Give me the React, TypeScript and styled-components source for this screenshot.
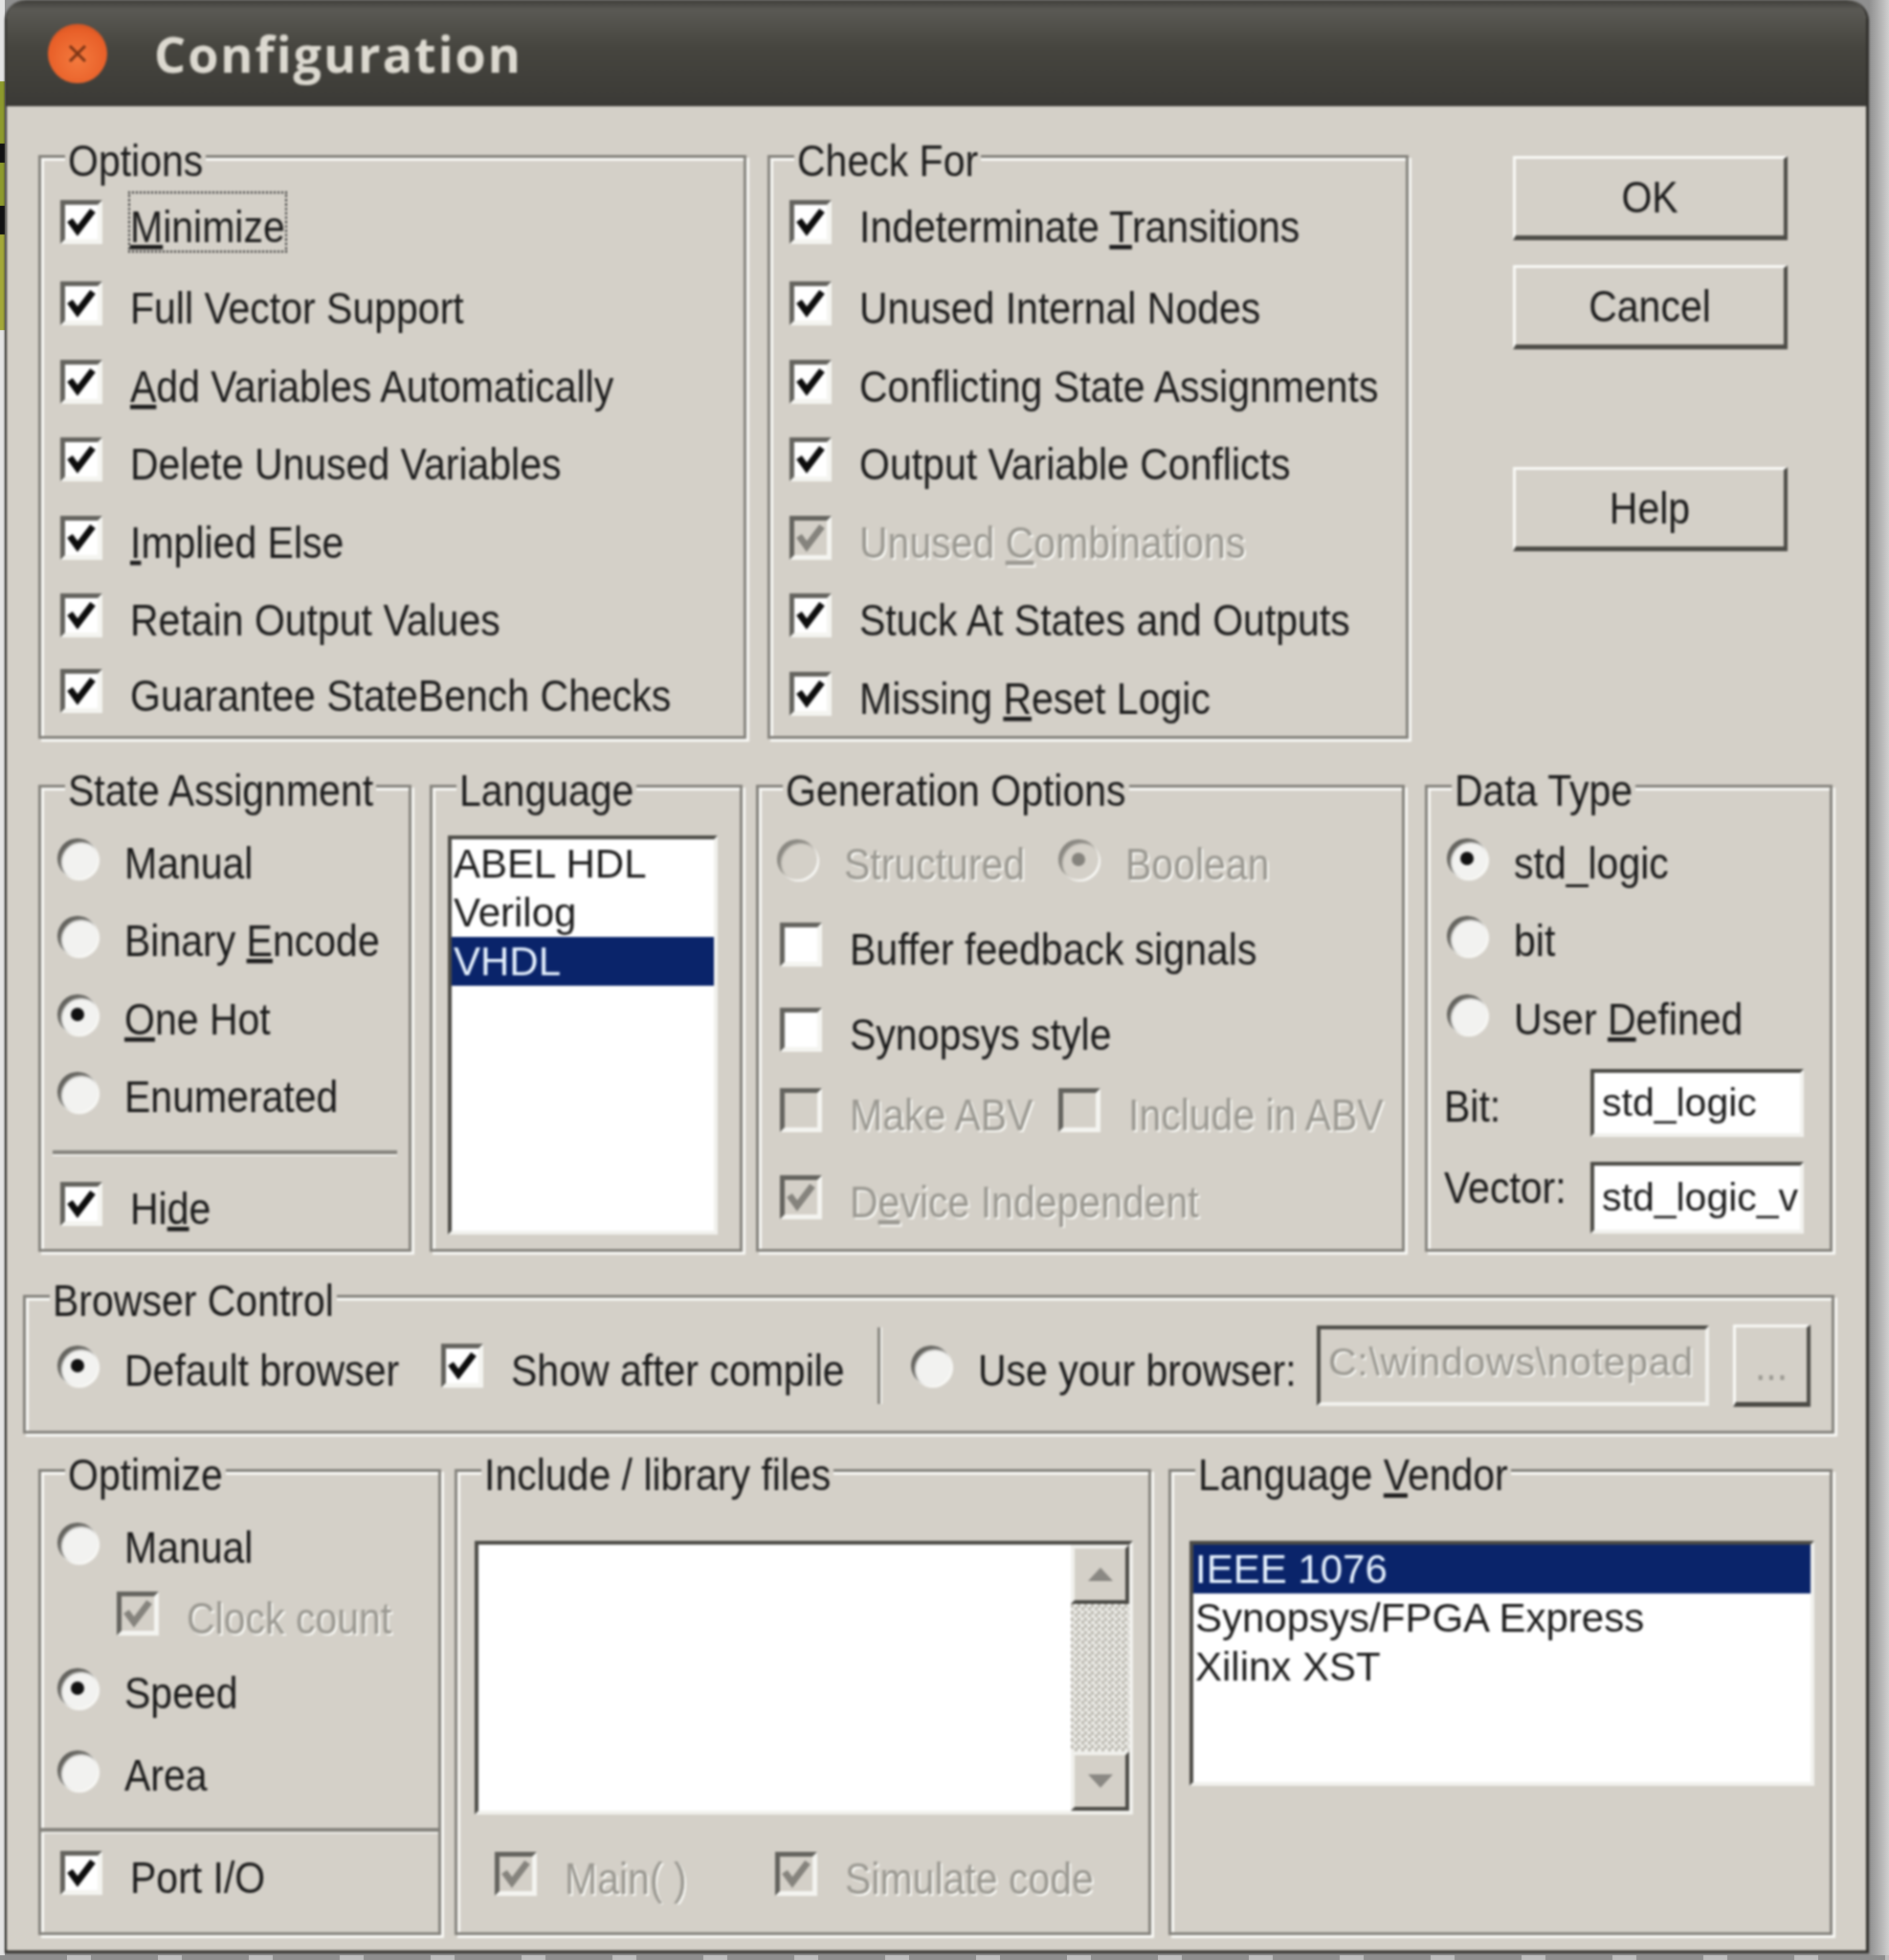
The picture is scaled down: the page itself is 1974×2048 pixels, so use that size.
import React from 'react';
import styled, { createGlobalStyle, css } from 'styled-components';

const FACE = '#d4d0c8';
const ETCH = '#85837d';
const SHADE = '#4c4b46';
const NAVY = '#0a246a';
const GRAYTEXT = '#9b9992';

const GlobalStyle = createGlobalStyle`
    html, body {
        margin: 0;
        padding: 0;
        background: #c4c4c4;
    }
    body {
        font-family: "Liberation Sans", Arial, sans-serif;
        font-size: 41px;
        color: #1c1c1c;
    }
`;

// the old bitmap font is taller and narrower than Liberation Sans
const tall = css`
    display: inline-block;
    transform: scaleY(1.14);
`;

const Page = styled.div`
    width: 1974px;
    height: 2048px;
    overflow: hidden;
    padding-left: 5px;
    box-sizing: border-box;
    background:
        repeating-linear-gradient(to right, #8e8e8e 0 70px, #bdbdbd 70px 95px) left bottom / 100% 5px no-repeat,
        linear-gradient(to bottom, #e4e4e4 0 85px, #8d9a2c 85px 150px, #111 150px 170px, #8d9a2c 170px 215px, #111 215px 245px, #a3a838 245px 345px, #e4e4e4 345px) left top / 5px 100% no-repeat,
        linear-gradient(to right, #8f8f8f 1953px, #cfcfcf 1974px);
`;

const Dialog = styled.div`
    width: 1948px;
    height: 2041px;
    box-sizing: border-box;
    background: ${FACE};
    border-radius: 22px 22px 0 0;
    border: solid #33322e;
    border-width: 0 3px 3px 2px;
    filter: blur(0.8px);
`;

const TitleBar = styled.div`
    height: 111px;
    display: flex;
    align-items: center;
    gap: 49px;
    padding-left: 43px;
    border-radius: 20px 20px 0 0;
    background: linear-gradient(to bottom, #3f3e3a 0, #5a5954 10px, #46453f 50px, #3b3a36 100%);
`;

const CloseButton = styled.span`
    width: 62px;
    height: 62px;
    border-radius: 50%;
    display: flex;
    align-items: center;
    justify-content: center;
    background: radial-gradient(circle at 50% 60%, #f47a3e 0, #e85f28 65%, #a9441f 100%);
`;

const Title = styled.span`
    font-family: "Open Sans", sans-serif;
    font-weight: 700;
    font-size: 52px;
    letter-spacing: 2px;
    color: #dcd9d0;
`;

const Body = styled.div`
    display: flex;
    flex-direction: column;
    padding: 51px 0 0 15px;
`;

const Section = styled.div<{ $mt?: number; $pl?: number; $h: number }>`
    display: flex;
    height: ${p => p.$h}px;
    margin-top: ${p => p.$mt ?? 0}px;
    padding-left: ${p => p.$pl ?? 0}px;
`;

const Group = styled.div<{ $w: number; $ml?: number; $pl?: number; $pt?: number }>`
    position: relative;
    width: ${p => p.$w}px;
    margin-left: ${p => p.$ml ?? 0}px;
    padding: ${p => p.$pt ?? 33}px 0 0 ${p => p.$pl ?? 17}px;
    box-sizing: border-box;
    border: 3px solid ${ETCH};
    box-shadow: inset 3px 3px 0 #f8f8f5, 3px 3px 0 #f8f8f5;
`;

const Legend = styled.span`
    ${tall}
    position: absolute;
    top: -19px;
    left: 25px;
    padding: 0 3px;
    line-height: 44px;
    background: ${FACE};
    white-space: nowrap;
`;

const Row = styled.div<{ $h?: number; $mt?: number; $mb?: number; $indent?: number }>`
    display: flex;
    align-items: center;
    height: ${p => p.$h ?? 81.5}px;
    margin-top: ${p => p.$mt ?? 0}px;
    margin-bottom: ${p => p.$mb ?? 0}px;
    padding-left: ${p => p.$indent ?? 0}px;
`;

const Item = styled.div<{ $w?: number }>`
    display: flex;
    align-items: center;
    flex: none;
    width: ${p => (p.$w ? `${p.$w}px` : 'auto')};
`;

const Label = styled.span<{ $off?: boolean; $focus?: boolean }>`
    ${tall}
    padding-top: 8px;
    margin-left: 29px;
    line-height: 44px;
    white-space: nowrap;
    color: ${p => (p.$off ? GRAYTEXT : 'inherit')};
    text-shadow: ${p => (p.$off ? '2px 2px 0 #f6f6f2' : 'none')};
    outline: ${p => (p.$focus ? '2px dotted #333' : 'none')};
`;

const Box = styled.span<{ $off?: boolean }>`
    flex: none;
    width: 44px;
    height: 46px;
    margin-left: 3px;
    box-sizing: border-box;
    display: flex;
    align-items: center;
    justify-content: center;
    background: ${p => (p.$off ? FACE : '#fff')};
    border: 5px solid;
    border-color: #64635e #f4f4f0 #f4f4f0 #64635e;
`;

const Round = styled.span<{ $off?: boolean }>`
    flex: none;
    width: 42px;
    height: 42px;
    margin-right: -1px;
    border-radius: 50%;
    display: flex;
    align-items: center;
    justify-content: center;
    background: ${p => (p.$off ? FACE : '#f2f2f0')};
    box-shadow: inset 4px 4px 2px ${p => (p.$off ? '#8a8882' : '#64635e')}, 2px 2px 1px #f8f8f5;
`;

const Dot = styled.span<{ $off?: boolean }>`
    width: 14px;
    height: 14px;
    border-radius: 50%;
    background: ${p => (p.$off ? '#85837d' : '#111')};
`;

const Accel = styled.u`
    text-underline-offset: 3px;
`;

const Sunken = styled.div<{ $w: number; $h: number; $mt?: number; $off?: boolean }>`
    flex: none;
    width: ${p => p.$w}px;
    height: ${p => p.$h}px;
    margin-top: ${p => p.$mt ?? 0}px;
    box-sizing: border-box;
    overflow: hidden;
    background: ${p => (p.$off ? FACE : '#fff')};
    border: 4px solid;
    border-color: ${SHADE} #f1f1ed #f1f1ed ${SHADE};
`;

const ListItem = styled.div<{ $on?: boolean }>`
    height: 51px;
    line-height: 51px;
    padding-left: 2px;
    font-size: 42px;
    white-space: nowrap;
    color: ${p => (p.$on ? '#e6f2ff' : 'inherit')};
    background: ${p => (p.$on ? NAVY : 'transparent')};
`;

const FieldText = styled.div<{ $off?: boolean }>`
    height: 100%;
    box-sizing: border-box;
    display: flex;
    align-items: center;
    padding-left: 8px;
    padding-bottom: ${p => (p.$off ? 8 : 0)}px;
    letter-spacing: ${p => (p.$off ? 0.7 : 0)}px;
    white-space: nowrap;
    color: ${p => (p.$off ? GRAYTEXT : 'inherit')};
    text-shadow: ${p => (p.$off ? '2px 2px 0 #f0f0ec' : 'none')};
`;

const FieldLabel = styled.span<{ $up?: boolean }>`
    ${tall}
    width: 153px;
    margin-left: -3px;
    flex: none;
    padding-top: ${p => (p.$up ? 0 : 8)}px;
    padding-bottom: ${p => (p.$up ? 18 : 0)}px;
`;

const Etched = styled.div<{ $w: number; $ml: number; $mt: number; $mb: number }>`
    width: ${p => p.$w}px;
    height: 4px;
    margin: ${p => p.$mt}px 0 ${p => p.$mb}px ${p => p.$ml}px;
    background: ${ETCH};
    box-shadow: 0 2px 0 #eeeeea;
`;

const VLine = styled.div`
    width: 3px;
    height: 80px;
    flex: none;
    margin-right: 32px;
    background: ${ETCH};
    box-shadow: 2px 0 0 #f4f4f0;
`;

const Buttons = styled.div`
    margin-left: 109px;
    padding-top: 1px;
    display: flex;
    flex-direction: column;
`;

const Push = styled.div<{ $w?: number; $h?: number; $mt?: number; $ml?: number; $off?: boolean }>`
    flex: none;
    width: ${p => p.$w ?? 287}px;
    height: ${p => p.$h ?? 88}px;
    margin-top: ${p => p.$mt ?? 0}px;
    margin-left: ${p => p.$ml ?? 0}px;
    box-sizing: border-box;
    display: flex;
    align-items: center;
    justify-content: center;
    border: solid;
    border-width: 3px 4px 5px 3px;
    border-color: #f8f8f5 ${SHADE} ${SHADE} #f8f8f5;
    color: ${p => (p.$off ? GRAYTEXT : 'inherit')};
`;

const PushText = styled.span`
    ${tall}
`;

const ListSplit = styled.div`
    display: flex;
    justify-content: flex-end;
    height: 100%;
`;

const ScrollBar = styled.div`
    width: 61px;
    display: flex;
    flex-direction: column;
`;

const ScrollButton = styled.div`
    height: 62px;
    flex: none;
    box-sizing: border-box;
    display: flex;
    align-items: center;
    justify-content: center;
    background: ${FACE};
    border: 4px solid;
    border-color: #f0f0ec ${SHADE} ${SHADE} #f0f0ec;
`;

const ScrollTrack = styled.div`
    flex: 1;
    background: repeating-conic-gradient(#efefeb 0 25%, #bdbab2 0 50%) 0 0 / 7px 7px;
`;

const CheckMark = ({ off }: { off?: boolean }) => (
    <svg width="30" height="30" viewBox="0 0 30 30">
        <path d="M3 13 L11 24 L27 3" fill="none" stroke={off ? '#85837d' : '#0c0c0c'} strokeWidth="7" />
    </svg>
);

const Check = ({ off, empty }: { off?: boolean; empty?: boolean }) => (
    <Box $off={off}>{!empty && <CheckMark off={off} />}</Box>
);

const Radio = ({ on, off }: { on?: boolean; off?: boolean }) => (
    <Round $off={off}>{on && <Dot $off={off} />}</Round>
);

const CheckItem = ({ children, off, empty, w, focus }: { children: React.ReactNode; off?: boolean; empty?: boolean; w?: number; focus?: boolean }) => (
    <Item $w={w}>
        <Check off={off} empty={empty} />
        <Label $off={off} $focus={focus}>{children}</Label>
    </Item>
);

const RadioItem = ({ children, on, off, w }: { children: React.ReactNode; on?: boolean; off?: boolean; w?: number }) => (
    <Item $w={w}>
        <Radio on={on} off={off} />
        <Label $off={off}>{children}</Label>
    </Item>
);

const optionRows: React.ReactNode[] = [
    <><Accel>M</Accel>inimize</>,
    'Full Vector Support',
    <><Accel>A</Accel>dd Variables Automatically</>,
    'Delete Unused Variables',
    <><Accel>I</Accel>mplied Else</>,
    'Retain Output Values',
    'Guarantee StateBench Checks',
];

const checkForRows: { text: React.ReactNode; off?: boolean }[] = [
    { text: <>Indeterminate <Accel>T</Accel>ransitions</> },
    { text: 'Unused Internal Nodes' },
    { text: 'Conflicting State Assignments' },
    { text: 'Output Variable Conflicts' },
    { text: <>Unused <Accel>C</Accel>ombinations</>, off: true },
    { text: 'Stuck At States and Outputs' },
    { text: <>Missing <Accel>R</Accel>eset Logic</> },
];

const TriangleUp = () => (
    <svg width="28" height="16" viewBox="0 0 28 16"><path d="M14 1 L27 15 L1 15 Z" fill="#8a8883" /></svg>
);

const TriangleDown = () => (
    <svg width="28" height="16" viewBox="0 0 28 16"><path d="M1 1 L27 1 L14 15 Z" fill="#8a8883" /></svg>
);

export default function App() {
    return (
        <>
            <GlobalStyle />
            <Page>
                <Dialog>
                    <TitleBar>
                        <CloseButton>
                            <svg width="24" height="24" viewBox="0 0 24 24">
                                <path d="M4 4 L20 20 M20 4 L4 20" stroke="#7b3415" strokeWidth="3" />
                            </svg>
                        </CloseButton>
                        <Title>Configuration</Title>
                    </TitleBar>
                    <Body>
                        <Section $h={610} $pl={18}>
                            <Group $w={740} $pt={26}>
                                <Legend>Options</Legend>
                                {optionRows.map((text, i) => (
                                    <Row key={i} $mb={i === 0 ? 4 : 0} $mt={i === 6 ? -3 : 0}>
                                        <CheckItem focus={i === 0}>{text}</CheckItem>
                                    </Row>
                                ))}
                            </Group>
                            <Group $w={670} $ml={22} $pt={26}>
                                <Legend>Check For</Legend>
                                {checkForRows.map((row, i) => (
                                    <Row key={i} $mb={i === 0 ? 4 : 0}>
                                        <CheckItem off={row.off}>{row.text}</CheckItem>
                                    </Row>
                                ))}
                            </Group>
                            <Buttons>
                                <Push><PushText>OK</PushText></Push>
                                <Push $mt={26}><PushText>Cancel</PushText></Push>
                                <Push $mt={123}><PushText>Help</PushText></Push>
                            </Buttons>
                        </Section>

                        <Section $h={488} $mt={48} $pl={18}>
                            <Group $w={390}>
                                <Legend>State Assignment</Legend>
                                <Row><RadioItem>Manual</RadioItem></Row>
                                <Row><RadioItem>Binary <Accel>E</Accel>ncode</RadioItem></Row>
                                <Row><RadioItem on><Accel>O</Accel>ne Hot</RadioItem></Row>
                                <Row><RadioItem>Enumerated</RadioItem></Row>
                                <Etched $w={360} $ml={-5} $mt={20} $mb={11} />
                                <Row><CheckItem>Hi<Accel>d</Accel>e</CheckItem></Row>
                            </Group>
                            <Group $w={327} $ml={19} $pl={16} $pt={50}>
                                <Legend>Language</Legend>
                                <Sunken $w={282} $h={417}>
                                    <ListItem>ABEL HDL</ListItem>
                                    <ListItem>Verilog</ListItem>
                                    <ListItem $on>VHDL</ListItem>
                                </Sunken>
                            </Group>
                            <Group $w={678} $ml={14} $pl={19} $pt={30}>
                                <Legend>Generation Options</Legend>
                                <Row $h={89}>
                                    <RadioItem off w={294}>Structured</RadioItem>
                                    <RadioItem off on>Boolean</RadioItem>
                                </Row>
                                <Row $h={89}><CheckItem empty>Buffer feedback signals</CheckItem></Row>
                                <Row $h={89}><CheckItem empty>Synopsys style</CheckItem></Row>
                                <Row $h={79}>
                                    <CheckItem off empty w={291}>Make ABV</CheckItem>
                                    <CheckItem off empty>Include in ABV</CheckItem>
                                </Row>
                                <Row $h={103}><CheckItem off>D<Accel>e</Accel>vice Independent</CheckItem></Row>
                            </Group>
                            <Group $w={426} $ml={21} $pl={20}>
                                <Legend>Data Type</Legend>
                                <Row><RadioItem on>std_logic</RadioItem></Row>
                                <Row><RadioItem>bit</RadioItem></Row>
                                <Row $h={82}><RadioItem>User <Accel>D</Accel>efined</RadioItem></Row>
                                <Row $h={71} $mt={16}>
                                    <FieldLabel>Bit:</FieldLabel>
                                    <Sunken $w={223} $h={71}><FieldText>std_logic</FieldText></Sunken>
                                </Row>
                                <Row $h={75} $mt={26}>
                                    <FieldLabel $up>Vector:</FieldLabel>
                                    <Sunken $w={223} $h={75}><FieldText>std_logic_v</FieldText></Sunken>
                                </Row>
                            </Group>
                        </Section>

                        <Section $h={145} $mt={45} $pl={2}>
                            <Group $w={1893} $pl={33} $pt={28}>
                                <Legend>Browser Control</Legend>
                                <Row $h={86}>
                                    <RadioItem on w={398}>Default browser</RadioItem>
                                    <CheckItem w={459}>Show after compile</CheckItem>
                                    <VLine />
                                    <RadioItem w={424}>Use your browser:</RadioItem>
                                    <Sunken $w={410} $h={84} $off><FieldText $off>C:\windows\notepad</FieldText></Sunken>
                                    <Push $w={81} $h={86} $ml={25} $off><PushText>...</PushText></Push>
                                </Row>
                            </Group>
                        </Section>

                        <Section $h={487} $mt={37} $pl={18}>
                            <Group $w={421} $pt={36}>
                                <Legend>Optimize</Legend>
                                <Row $h={75}><RadioItem>Manual</RadioItem></Row>
                                <Row $h={74} $indent={59}><CheckItem off>Clock count</CheckItem></Row>
                                <Row $h={82}><RadioItem on>Speed</RadioItem></Row>
                                <Row $h={90}><RadioItem>Area</RadioItem></Row>
                                <Etched $w={415} $ml={-17} $mt={15} $mb={2} />
                                <Row $h={82}><CheckItem>Port I/O</CheckItem></Row>
                            </Group>
                            <Group $w={728} $ml={14} $pl={18} $pt={72}>
                                <Legend>Include / library files</Legend>
                                <Sunken $w={688} $h={286}>
                                    <ListSplit>
                                        <ScrollBar>
                                            <ScrollButton><TriangleUp /></ScrollButton>
                                            <ScrollTrack />
                                            <ScrollButton><TriangleDown /></ScrollButton>
                                        </ScrollBar>
                                    </ListSplit>
                                </Sunken>
                                <Row $h={82} $mt={21} $indent={18}>
                                    <CheckItem off w={293}>Main( )</CheckItem>
                                    <CheckItem off>Simulate code</CheckItem>
                                </Row>
                            </Group>
                            <Group $w={694} $ml={18} $pl={19} $pt={72}>
                                <Legend>Language <Accel>V</Accel>endor</Legend>
                                <Sunken $w={653} $h={256}>
                                    <ListItem $on>IEEE 1076</ListItem>
                                    <ListItem>Synopsys/FPGA Express</ListItem>
                                    <ListItem>Xilinx XST</ListItem>
                                </Sunken>
                            </Group>
                        </Section>
                    </Body>
                </Dialog>
            </Page>
        </>
    );
}
